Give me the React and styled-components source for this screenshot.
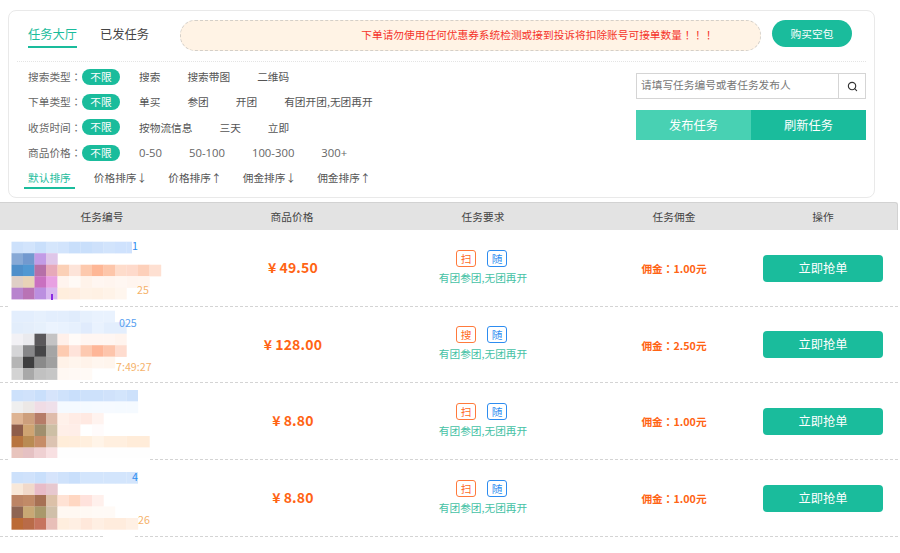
import React from 'react'
import styled, { createGlobalStyle } from 'styled-components'
import { Search } from 'lucide-react'

const GlobalStyle = createGlobalStyle`
  html, body {
    margin: 0;
    padding: 0;
    background: #fff;
    font-family: "Noto Sans CJK SC", "Liberation Sans", sans-serif;
    font-size: 10.7px;
    color: #555;
  }
  * { box-sizing: border-box; }
`

const GREEN = '#1abc9c'

const Page = styled.div`
  width: 900px;
  height: 553px;
  overflow: hidden;
  padding-top: 10px;
`
const Panel = styled.div`
  margin-left: 8px;
  width: 867px;
  height: 188px;
  border: 1px solid #e9e9e9;
  border-radius: 8px;
  padding: 9px 8px 0 8px;
`
const TopBar = styled.div`
  display: flex;
  align-items: flex-start;
  height: 42px;
  border-bottom: 1px dotted #e4e4e4;
`
const Tabs = styled.div`
  display: flex;
  gap: 23px;
  margin-left: 11px;
  width: 152px;
`
const Tab = styled.div`
  font-size: 12.25px;
  line-height: 16px;
  padding-top: 6px;
  height: 28px;
  color: ${p => (p.$active ? GREEN : '#444')};
  border-bottom: ${p => (p.$active ? `2px solid ${GREEN}` : 'none')};
`
const Notice = styled.div`
  width: 581px;
  height: 31px;
  border: 1px dashed #d4cfc8;
  border-radius: 15px;
  background: #fff3e5;
  color: #f5332a;
  text-align: right;
  padding-right: 46px;
  line-height: 28px;
  white-space: nowrap;
`
const BuyButton = styled.div`
  width: 80px;
  height: 27px;
  margin-left: 11px;
  border-radius: 14px;
  background: ${GREEN};
  color: #fff;
  text-align: center;
  line-height: 27px;
`
// the reference has its full-width punctuation centred in the em box
const Punct = styled.span`
  font-family: "Noto Sans CJK TC", sans-serif;
`
const Body = styled.div`
  display: flex;
  justify-content: space-between;
  padding: 0 0 0 11px;
`
const Filters = styled.div`
  padding-top: 2px;
`
const FilterRow = styled.div`
  display: flex;
  align-items: center;
  height: 25.3px;
`
const FilterLabel = styled.span`
  width: 54px;
  color: #666;
  white-space: nowrap;
`
const Pill = styled.span`
  width: 38px;
  height: 16px;
  margin-right: 19px;
  border-radius: 8px;
  background: ${GREEN};
  color: #fff;
  text-align: center;
  line-height: 16px;
`
const Options = styled.div`
  display: flex;
  gap: 27px;
`
const Option = styled.span`
  color: #555;
  white-space: nowrap;
`
const NumberOption = styled(Option)`
  font-size: 11.3px;
  font-family: "Open Sans", sans-serif;
  color: #666;
`
const SortRow = styled.div`
  display: flex;
  gap: 15px;
  margin: 0 0 0 -4px;
  padding-top: 1px;
  height: 25px;
`
const SortItem = styled.span`
  padding: 4px 4px 0;
  height: 23px;
  line-height: 16px;
  white-space: nowrap;
  color: ${p => (p.$active ? GREEN : '#555')};
  border-bottom: ${p => (p.$active ? `2px solid ${GREEN}` : 'none')};
`
const Arrow = styled.span`
  margin-right: -2px;
`
const Side = styled.div`
  width: 230px;
  padding-top: 11px;
`
const SearchBox = styled.div`
  display: flex;
  height: 26px;
  border: 1px solid #d5d5d5;
`
const SearchText = styled.div`
  flex: 1;
  padding-left: 4px;
  line-height: 22px;
  color: #777;
  border-right: 1px solid #d5d5d5;
`
const SearchIcon = styled.div`
  width: 26px;
  display: flex;
  align-items: center;
  justify-content: center;
  color: #333;
`
const ActionPair = styled.div`
  display: flex;
  margin-top: 11px;
`
const ActionButton = styled.div`
  flex: 1;
  height: 30px;
  background: ${p => (p.$light ? '#48d1b3' : GREEN)};
  color: #fff;
  font-size: 12.25px;
  text-align: center;
  line-height: 30px;
`
const Table = styled.div`
  width: 898px;
  margin-top: 4px;
`
const columns = '230px 124px 258px 124px 162px'
const HeadRow = styled.div`
  display: grid;
  grid-template-columns: ${columns};
  height: 28px;
  background: #e3e3e3;
  border-top: 1px solid #d2d2d2;
  border-right: 1px solid #d2d2d2;
  border-radius: 0 3px 0 0;
  line-height: 27px;
  color: #444;
  text-align: center;
`
const HeadCell = styled.div`
  padding-left: ${p => (p.$action ? '12px' : '0')};
  padding-right: ${p => (p.$first ? '26px' : '0')};
`
const Row = styled.div`
  display: grid;
  grid-template-columns: ${columns};
  align-items: center;
  height: 76.7px;
  border-bottom: 1px dashed #d4d4d4;
`
const Price = styled.div`
  color: #ff6414;
  font-size: 14px;
  font-weight: 700;
  text-align: center;
  letter-spacing: 0.2px;
  margin-top: -3px;
  padding-left: 2px;
`
const Yen = styled.span`
  margin-right: 3px;
`
const Require = styled.div`
  display: flex;
  flex-direction: column;
  align-items: center;
  margin-top: -3px;
`
const Tags = styled.div`
  display: flex;
  gap: 11px;
  margin-right: 3px;
`
const Tag = styled.span`
  width: 20px;
  height: 17px;
  border: 1px solid ${p => (p.$blue ? '#2d8cf0' : '#ff7a3c')};
  border-radius: 3px;
  color: ${p => (p.$blue ? '#2d8cf0' : '#ff6a1e')};
  text-align: center;
  line-height: 15px;
`
const RequireText = styled.div`
  margin-top: 3px;
  color: #45c2a5;
  line-height: 15px;
`
const Commission = styled.div`
  color: #ff6414;
  font-weight: 700;
  text-align: center;
`
const ActionCell = styled.div`
  padding-left: 27px;
  margin-top: -1px;
`
const GrabButton = styled.div`
  width: 120px;
  height: 27px;
  border-radius: 4px;
  background: ${GREEN};
  color: #fff;
  font-size: 12.25px;
  text-align: center;
  line-height: 27px;
`
const Thumb = styled.svg`
  display: block;
  width: 230px;
  height: 77px;
  overflow: visible;
`

const CELL = 11.5
const W = '#ffffff'

// redacted area of each row: one array of colours per mosaic line
const mosaics = [
  {
    top: 11.7,
    firstEnd: 132,
    texts: [
      { x: 132, y: 20, fill: '#2d8cf0', text: '1' },
      { x: 137, y: 64, fill: '#f5b26b', text: '25' },
    ],
    lines: [
      ['#cde1fb', '#d2e4fc', '#c9dffb', '#d5e6fc', '#d2e4fc', '#c9dffb', '#c9dffb', '#cee1fb', '#d2e4fc', '#cfe2fd', '#cfe2fd'],
      ['#87a9d6', '#7299cf', '#c29be6', '#dfc6e9'],
      ['#4f8fca', '#5198d2', '#b66fa8', '#e7a9b9', '#fbd0b6', '#fde4d9', '#fdc9ad', '#feb796', '#fdc6aa', '#fedccb', '#fedacb', '#fdd0ba', '#fee0d2'],
      ['#dfcfc6', '#e8d3b7', '#c970c0', '#e8a0e2', '#fff4ee', '#fffaf6', '#fff3ea', '#fff6f1', '#fff5ef', '#fff7f2', '#fff5ef', '#fff6f0'],
      ['#b884ce', '#b973b5', '#bb8fe0', '#d9b8ef', '#ffeedd', '#ffeee0', '#fff2e6', '#fff1e4', '#fff3e8', '#fff6ee'],
    ],
    extra: { x: 51, y: 64, w: 2, h: 6, fill: '#8a2be2' },
    smudge: { x: 10, w: 70 },
  },
  {
    top: 3.7,
    firstEnd: 115,
    texts: [
      { x: 119, y: 20, fill: '#5a9ff0', text: '025' },
      { x: 116, y: 64, fill: '#f5b26b', text: '7:49:27' },
    ],
    lines: [
      ['#e3eefd', '#e3eefd', '#e6f0fd', '#e3eefd', '#e3eefd', '#e0ecfc', '#e6f0fd', '#e9f2fe', '#e9f2fe'],
      ['#e2edfb', '#e4eefb', '#e6f0fc', '#ebf3fe', '#e9f2fe', '#e6f0fd', '#e0ebfc', '#e9f2fe', '#e3eefd', '#e3eefd'],
      ['#f2f1f5', '#eaeaee', '#5a585b', '#c4c3c4', '#fff0ea', '#fffbf8', '#fff6f2', '#fff6f2', '#fff6f2', '#fff4ee'],
      ['#d5d5d7', '#878789', '#464648', '#a5a5a5', '#fdcbb1', '#fee3da', '#fdc9b0', '#feb698', '#fdc5ac', '#fedccf'],
      ['#b5b5b5', '#3e3e3f', '#8a8a8a', '#a0a0a0', '#fff2e8', '#fff5ed', '#fff3ea', '#fff6ef', '#fff5ed'],
      ['#d3d3d3', '#a8a8a8', '#c1c1c1', '#c6c6c6', '#fff8f3', '#fff9f5', '#fffaf6'],
    ],
    smudge: { x: 50, w: 30 },
  },
  {
    top: 7,
    firstEnd: 138,
    texts: [],
    lines: [
      ['#cde1fb', '#d0e2fb', '#c9dffb', '#d6e4fb', '#cfe2fb', '#c9dffb', '#cde1fb', '#cde1fb', '#d0e2fb', '#d3e5fc', '#cde1fb'],
      ['#efefef', '#ece8e6', '#f0dce5', '#efe0ea', '#f5faff', '#f5faff', '#f5faff', '#f6faff', '#f6faff', '#f5faff', '#f5faff'],
      ['#deb493', '#cd9f7c', '#b67c68', '#dfbcab', '#fff1ea', '#ffece5', '#ffe9e2', '#fff3ef'],
      ['#8e5d4a', '#cfa472', '#a08f6e', '#cdbfa5', '#ffefe8', '#ffeee8', W, '#fffbfb'],
      ['#b7743f', '#b98b53', '#c68d68', '#dcc3b1', '#ffedd9', '#ffeddb', '#ffefde', '#fff4e8', '#ffefdf', '#ffefdf', '#ffecd9', '#ffecd9'],
      ['#e8c4bd', '#e5c1c3', '#efd0d2', '#f8e0e2', '#fefefe', '#fefefe', '#fefefe', '#fefefe', '#fefefe', '#fefefe', '#fefefe', '#fefefe'],
    ],
    smudge: { x: 10, w: 140 },
  },
  {
    top: 12,
    firstEnd: 138,
    texts: [
      { x: 132, y: 21, fill: '#2d8cf0', text: '4' },
      { x: 138, y: 64, fill: '#f5b26b', text: '26' },
    ],
    lines: [
      ['#cde1fb', '#d0e2fb', '#c9dffb', '#d6e4fb', '#cfe2fb', '#c9dffb', '#d3e5fc', '#d3e5fc', '#d3e5fc', '#d3e5fc', '#d3e5fc'],
      ['#f8e8d9', '#f1d9ca', '#e8bcc8', '#e7c8cf'],
      ['#bc8465', '#c18a67', '#a77154', '#dcc1a8', '#ffe2d4', '#ffd7c2', '#ffe2dc', '#fff0ec'],
      ['#8e6553', '#c8a875', '#a9996b', '#d0c0a9', '#fff8f2', '#fff8f2', '#fff9f4', '#fffaf6', '#fffaf6'],
      ['#bb6a35', '#b96b48', '#c6745e', '#e8bfb8', '#ffeede', '#ffefe3', '#ffe8db', '#ffefe3', '#ffecdd', '#ffecdd', '#fff0e4'],
    ],
    smudge: { x: 105, w: 30 },
  },
]

const Redacted = ({ data }) => (
  <Thumb viewBox="0 0 230 77">
    {data.lines.map((line, r) =>
      line.map((c, i) => {
        const x = 11.5 + i * CELL
        const end = r === 0 ? data.firstEnd : 999
        if (x >= end) return null
        return <rect key={`${r}-${i}`} x={x} y={data.top + r * CELL} width={Math.min(CELL + 0.2, end - x)} height={CELL + 0.2} fill={c} />
      })
    )}
    {data.texts.map(t => (
      <text key={t.text} x={t.x} y={t.y} fill={t.fill} fontSize="10.7">{t.text}</text>
    ))}
    {data.extra && <rect x={data.extra.x} y={data.extra.y} width={data.extra.w} height={data.extra.h} fill={data.extra.fill} />}
    <rect x={data.smudge.x} y="75" width={data.smudge.w} height="3" fill="#fff" />
  </Thumb>
)

const filters = [
  { label: '搜索类型', options: ['搜索', '搜索带图', '二维码'] },
  { label: '下单类型', options: ['单买', '参团', '开团', '有团开团,无团再开'] },
  { label: '收货时间', options: ['按物流信息', '三天', '立即'] },
  { label: '商品价格', options: ['0-50', '50-100', '100-300', '300+'], numeric: true },
]

const sorts = [
  { text: '默认排序', arrow: '' },
  { text: '价格排序', arrow: '↓' },
  { text: '价格排序', arrow: '↑' },
  { text: '佣金排序', arrow: '↓' },
  { text: '佣金排序', arrow: '↑' },
]

const rows = [
  { price: '49.50', scan: '扫', commission: '1.00元' },
  { price: '128.00', scan: '搜', commission: '2.50元' },
  { price: '8.80', scan: '扫', commission: '1.00元' },
  { price: '8.80', scan: '扫', commission: '1.00元' },
]

export default function App() {
  return (
    <Page>
      <GlobalStyle />
      <Panel>
        <TopBar>
          <Tabs>
            <Tab $active>任务大厅</Tab>
            <Tab>已发任务</Tab>
          </Tabs>
          <Notice>下单请勿使用任何优惠券系统检测或接到投诉将扣除账号可接单数量<Punct>！！！</Punct></Notice>
          <BuyButton>购买空包</BuyButton>
        </TopBar>
        <Body>
          <Filters>
            {filters.map(f => (
              <FilterRow key={f.label}>
                <FilterLabel>{f.label}<Punct>：</Punct></FilterLabel>
                <Pill>不限</Pill>
                <Options>
                  {f.options.map(o =>
                    f.numeric ? <NumberOption key={o}>{o}</NumberOption> : <Option key={o}>{o}</Option>
                  )}
                </Options>
              </FilterRow>
            ))}
            <SortRow>
              {sorts.map((s, i) => (
                <SortItem key={i} $active={i === 0}>{s.text}{s.arrow && <Arrow>{s.arrow}</Arrow>}</SortItem>
              ))}
            </SortRow>
          </Filters>
          <Side>
            <SearchBox>
              <SearchText>请填写任务编号或者任务发布人</SearchText>
              <SearchIcon><Search size={11} strokeWidth={2.5} /></SearchIcon>
            </SearchBox>
            <ActionPair>
              <ActionButton $light>发布任务</ActionButton>
              <ActionButton>刷新任务</ActionButton>
            </ActionPair>
          </Side>
        </Body>
      </Panel>
      <Table>
        <HeadRow>
          <HeadCell $first>任务编号</HeadCell>
          <HeadCell>商品价格</HeadCell>
          <HeadCell>任务要求</HeadCell>
          <HeadCell>任务佣金</HeadCell>
          <HeadCell $action>操作</HeadCell>
        </HeadRow>
        {rows.map((r, i) => (
          <Row key={i}>
            <Redacted data={mosaics[i]} />
            <Price><Yen>¥</Yen>{r.price}</Price>
            <Require>
              <Tags>
                <Tag>{r.scan}</Tag>
                <Tag $blue>随</Tag>
              </Tags>
              <RequireText>有团参团,无团再开</RequireText>
            </Require>
            <Commission>佣金<Punct>：</Punct>{r.commission}</Commission>
            <ActionCell><GrabButton>立即抢单</GrabButton></ActionCell>
          </Row>
        ))}
      </Table>
    </Page>
  )
}
